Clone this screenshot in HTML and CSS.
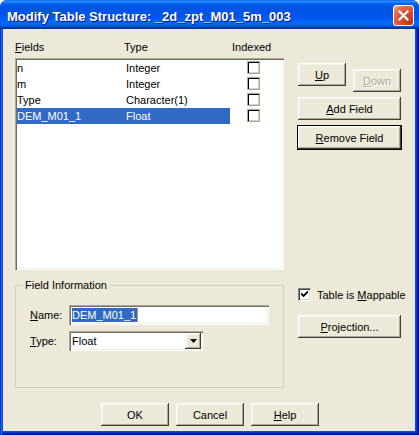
FILE: index.html
```html
<!DOCTYPE html>
<html>
<head>
<meta charset="utf-8">
<title>Modify Table Structure</title>
<link rel="stylesheet" href="styles.css">
</head>
<body>
<div class="window">
  <div class="titlebar">
    <span class="title">Modify Table Structure: _2d_zpt_M01_5m_003</span>
    <button class="close" aria-label="Close">
      <svg width="11" height="11" viewBox="0 0 11 11"><path d="M1.5 1.5 L9.5 9.5 M9.5 1.5 L1.5 9.5" stroke="#fff" stroke-width="2.2" stroke-linecap="square"/></svg>
    </button>
  </div>
  <div class="frame">
    <div class="client">
      <div class="main">
        <div class="fields">
          <div class="list-header"><span><u>F</u>ields</span><span>Type</span><span>Indexed</span></div>
          <div class="list">
            <div class="row"><span class="sel"><span class="c-name">n</span><span class="c-type">Integer</span></span><span class="chk"></span></div>
            <div class="row"><span class="sel"><span class="c-name">m</span><span class="c-type">Integer</span></span><span class="chk"></span></div>
            <div class="row"><span class="sel"><span class="c-name">Type</span><span class="c-type">Character(1)</span></span><span class="chk"></span></div>
            <div class="row selected"><span class="sel"><span class="c-name">DEM_M01_1</span><span class="c-type">Float</span></span><span class="chk"></span></div>
          </div>
        </div>
        <div class="side upper">
          <div class="pair">
            <button class="btn"><u>U</u>p</button>
            <button class="btn disabled"><u>D</u>own</button>
          </div>
          <button class="btn"><u>A</u>dd Field</button>
          <button class="btn default"><u>R</u>emove Field</button>
        </div>
        <fieldset class="group">
          <legend>Field Information</legend>
          <div class="group-body">
            <div class="form-row">
              <span class="lbl"><u>N</u>ame:</span>
              <div class="input"><span class="hl">DEM_M01_1</span><span class="caret"></span></div>
            </div>
            <div class="form-row">
              <span class="lbl"><u>T</u>ype:</span>
              <div class="combo"><span class="combo-text">Float</span><span class="drop"><svg width="7" height="4" viewBox="0 0 7 4"><path d="M0 0 H7 L3.5 4 Z" fill="#000"/></svg></span></div>
            </div>
          </div>
        </fieldset>
        <div class="side lower">
          <div class="check"><span class="box"><svg width="7" height="7" viewBox="0 0 7 7"><path d="M0 2.5 L2.5 5 L7 0.5" fill="none" stroke="#000" stroke-width="1.8"/></svg></span><span class="check-label">Table is <u>M</u>appable</span></div>
          <button class="btn"><u>P</u>rojection...</button>
        </div>
      </div>
      <div class="footer">
        <button class="btn">OK</button>
        <button class="btn">Cancel</button>
        <button class="btn"><u>H</u>elp</button>
      </div>
    </div>
  </div>
</div>
</body>
</html>
```

FILE: styles.css
```css
* { box-sizing: border-box; }
html, body { margin: 0; padding: 0; }
body {
  width: 419px;
  height: 435px;
  overflow: hidden;
  font-family: "Liberation Sans", Arial, sans-serif;
  font-size: 11px;
  color: #000;
  background: #fff;
}
u { text-underline-offset: 1px; }

.window {
  display: flex;
  flex-direction: column;
  width: 419px;
  height: 435px;
  background: #0831d9;
  border-radius: 7px 7px 0 0;
  overflow: hidden;
}

.titlebar {
  flex: none;
  height: 29px;
  display: flex;
  align-items: flex-start;
  padding-left: 7px;
  background: linear-gradient(to bottom, #0058ee 0%, #3593ff 4%, #288eff 6%, #127dff 8%, #036ffc 10%, #0262ee 14%, #0057e5 20%, #0054e3 24%, #0055eb 56%, #005bf5 66%, #026afe 76%, #0062ef 86%, #0052d6 92%, #0040ab 94%, #003092 100%);
}
.title {
  margin-top: 9px;
  line-height: 15px;
  font-size: 13px;
  font-weight: bold;
  color: #fff;
  text-shadow: 1px 1px #0f1089;
  white-space: nowrap;
}
.close {
  margin: 5px 5px 0 auto;
  width: 21px;
  height: 21px;
  padding: 0;
  border: 1px solid #fff;
  border-radius: 3px;
  background: radial-gradient(circle at 85% 85%, #c2350f 0%, #df4f2f 50%, #e76f50 75%, #f6b39c 100%);
  display: flex;
  align-items: center;
  justify-content: center;
}

.frame {
  flex: 1;
  display: flex;
  padding: 0 4px 4px 3px;
  background: #0a4be6;
  box-shadow: inset 1px 0 #0831d9, inset 2px 0 #166aee, inset -1px -1px #00138c, inset -2px -2px #001ea0, inset -3px -3px #003bda;
}
.client {
  flex: 1;
  display: flex;
  flex-direction: column;
  background: #ece9d8;
  padding: 11px 14px 0 12px;
}

.main {
  display: grid;
  grid-template-columns: 269px 103px;
  column-gap: 14px;
  row-gap: 9px;
}

/* list */
.list-header {
  display: grid;
  grid-template-columns: 109px 108px auto;
  height: 14px;
  line-height: 14px;
  margin-bottom: 4px;
}
.list {
  height: 212px;
  background: #fff;
  padding: 2px 0 0 2px;
  box-shadow: inset 1px 1px #aca899, inset 2px 2px #716f64, inset -1px -1px #fff, inset -2px -2px #f1efe2;
}
.row {
  display: flex;
  height: 16px;
  line-height: 16px;
}
.sel {
  display: flex;
  width: 213px;
}
.c-name { width: 107px; white-space: nowrap; }
.c-type { width: 106px; padding-left: 2px; white-space: nowrap; }
.selected .sel {
  background: #316ac5;
  color: #fff;
}
.chk {
  width: 13px;
  height: 13px;
  margin: 1px 0 0 17px;
  background: #fff;
  border: 1px solid #aca899;
  box-shadow: inset 1px 1px #000, inset -1px -1px #d4d0c8;
}

/* buttons */
.btn {
  font-family: "Liberation Sans", Arial, sans-serif;
  font-size: 11px;
  font-weight: 400;
  color: #000;
  background: #ece9d8;
  border: 0;
  padding: 0;
  height: 23px;
  box-shadow: inset -1px -1px #404040, inset 1px 1px #fff, inset -2px -2px #aca899, inset 2px 2px #f5f3ea;
}
.btn.disabled {
  color: #aca899;
  text-shadow: 1px 1px #fff;
}
.btn.default {
  box-shadow: 0 0 0 1px #000, inset -1px -1px #404040, inset 1px 1px #fff, inset -2px -2px #aca899, inset 2px 2px #f5f3ea;
}

.side { display: flex; flex-direction: column; }
.side.upper { padding-top: 23px; }
.side.upper .btn + .btn { margin-top: 6px; }
.pair {
  display: grid;
  grid-template-columns: 48px 48px;
  column-gap: 7px;
  margin-bottom: 5px;
}

/* group box */
.group {
  margin: 0;
  padding: 0;
  border: 1px solid #d0d0bf;
  min-width: 0;
}
.group legend {
  margin-left: 7px;
  padding: 0 2px;
  line-height: 13px;
}
.group-body {
  display: flex;
  flex-direction: column;
  gap: 6px;
  padding: 13px 0 36px 14px;
}
.form-row {
  display: flex;
  align-items: center;
  height: 20px;
}
.lbl { width: 39px; }
.input, .combo {
  height: 20px;
  background: #fff;
  display: flex;
  align-items: center;
  box-shadow: inset 1px 1px #aca899, inset 2px 2px #716f64, inset -1px -1px #fff, inset -2px -2px #f1efe2;
}
.input { width: 200px; padding: 0 3px; }
.hl {
  background: #316ac5;
  color: #fff;
  line-height: 14px;
  height: 14px;
  padding-right: 1px;
}
.caret {
  width: 1px;
  height: 14px;
  background: #c79a48;
}
.combo { width: 134px; padding: 2px 2px 2px 3px; }
.combo-text { flex: 1; }
.drop {
  width: 16px;
  height: 16px;
  background: #ece9d8;
  display: flex;
  align-items: center;
  justify-content: center;
  box-shadow: inset -1px -1px #404040, inset 1px 1px #f5f3ea, inset -2px -2px #aca899, inset 2px 2px #fff;
}

.side.lower { padding-top: 9px; }
.check {
  display: flex;
  align-items: center;
  height: 13px;
  gap: 6px;
  margin-bottom: 14px;
  white-space: nowrap;
}
.check-label { flex: none; }
.box {
  width: 13px;
  height: 13px;
  flex: none;
  background: #fff;
  border-style: solid;
  border-width: 1px;
  border-color: #808080 #fff #fff #808080;
  box-shadow: inset 1px 1px #404040, inset -1px -1px #d4d0c8;
  display: flex;
  align-items: center;
  justify-content: center;
}

.footer {
  display: flex;
  justify-content: center;
  gap: 7px;
  margin-top: 15px;
  padding-left: 4px;
}
.footer .btn { width: 68px; }
```
